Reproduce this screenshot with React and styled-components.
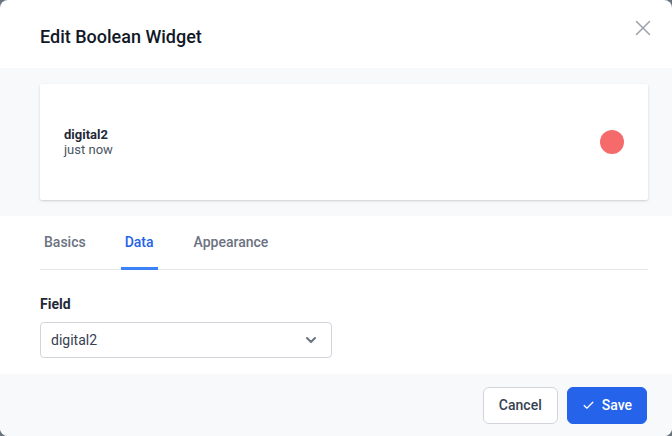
import React from "react";
import styled, { createGlobalStyle } from "styled-components";
import { X, ChevronDown, Check } from "lucide-react";

const Global = createGlobalStyle`
  html, body {
    margin: 0;
    padding: 0;
    background: #6b7280;
    font-family: Roboto, "Noto Sans", sans-serif;
  }
  * { box-sizing: border-box; }
`;

const Modal = styled.div`
  width: 672px;
  height: 436px;
  background: #fff;
  border-radius: 8px;
  overflow: hidden;
  display: flex;
  flex-direction: column;
`;

const Header = styled.div`
  height: 68px;
  display: flex;
  align-items: center;
  justify-content: space-between;
  padding: 0 16px 0 40px;
`;

const Title = styled.h2`
  margin: 0;
  font-size: 18px;
  font-weight: 500;
  color: #111827;
  padding-top: 4px;
`;

const CloseBtn = styled.button`
  border: none;
  background: none;
  padding: 0;
  color: #9ca3af;
  display: flex;
  align-self: flex-start;
  margin-top: 15px;
  cursor: pointer;
`;

const Preview = styled.div`
  background: #f8f9fb;
  padding: 16px 24px 16px 40px;
  height: 148px;
`;

const Card = styled.div`
  background: #fff;
  height: 116px;
  border-radius: 2px;
  box-shadow: 0 1px 3px rgba(0, 0, 0, 0.12), 0 1px 2px rgba(0, 0, 0, 0.06);
  display: flex;
  align-items: center;
  justify-content: space-between;
  padding: 0 24px;
`;

const Name = styled.div`
  font-size: 13px;
  font-weight: 700;
  color: #1f2937;
  line-height: 15px;
`;

const Time = styled.div`
  font-size: 13px;
  color: #4b5563;
  line-height: 15px;
`;

const Dot = styled.div`
  width: 24px;
  height: 24px;
  border-radius: 50%;
  background: ${p => p.color};
`;

const Body = styled.div`
  flex: 1;
  padding: 0 24px 0 40px;
`;

const Tabs = styled.div`
  display: flex;
  border-bottom: 1px solid #e5e7eb;
  height: 54px;
  align-items: flex-end;
`;

const Tab = styled.div`
  font-size: 14px;
  font-weight: 500;
  color: ${p => (p.active ? "#2563eb" : "#6b7280")};
  padding: 0 4px 17px;
  margin-right: ${p => p.gap}px;
  border-bottom: 3px solid ${p => (p.active ? "#3b82f6" : "transparent")};
  margin-bottom: -1px;
`;

const Label = styled.div`
  margin-top: 26px;
  font-size: 14px;
  font-weight: 700;
  color: #1f2937;
`;

const Select = styled.div`
  margin-top: 10px;
  width: 292px;
  height: 36px;
  border: 1px solid #d1d5db;
  border-radius: 4px;
  display: flex;
  align-items: center;
  justify-content: space-between;
  padding: 0 12px 0 10px;
  font-size: 14px;
  color: #374151;
`;

const Footer = styled.div`
  height: 62px;
  background: #f8f9fb;
  display: flex;
  justify-content: flex-end;
  align-items: center;
  gap: 9px;
  padding: 0 25px 0 0;
`;

const Button = styled.button`
  height: 37px;
  border-radius: 6px;
  font-family: Roboto, sans-serif;
  font-size: 14px;
  font-weight: 500;
  display: flex;
  align-items: center;
  gap: 7px;
  padding: 0 ${p => (p.primary ? "14px" : "15px")};
  border: 1px solid ${p => (p.primary ? "#2563eb" : "#d1d5db")};
  background: ${p => (p.primary ? "#2563eb" : "#fff")};
  color: ${p => (p.primary ? "#fff" : "#374151")};
`;

export default function App() {
  return (
    <>
      <Global />
      <Modal>
        <Header>
          <Title>Edit Boolean Widget</Title>
          <CloseBtn>
            <X size={26} strokeWidth={1.4} />
          </CloseBtn>
        </Header>
        <Preview>
          <Card>
            <div>
              <Name>digital2</Name>
              <Time>just now</Time>
            </div>
            <Dot color="#f56b6b" />
          </Card>
        </Preview>
        <Body>
          <Tabs>
            <Tab gap={31}>Basics</Tab>
            <Tab active gap={32}>Data</Tab>
            <Tab gap={0}>Appearance</Tab>
          </Tabs>
          <Label>Field</Label>
          <Select>
            <span>digital2</span>
            <ChevronDown size={16} strokeWidth={3} color="#6b7280" />
          </Select>
        </Body>
        <Footer>
          <Button>Cancel</Button>
          <Button primary>
            <Check size={13} strokeWidth={2.2} />
            Save
          </Button>
        </Footer>
      </Modal>
    </>
  );
}
